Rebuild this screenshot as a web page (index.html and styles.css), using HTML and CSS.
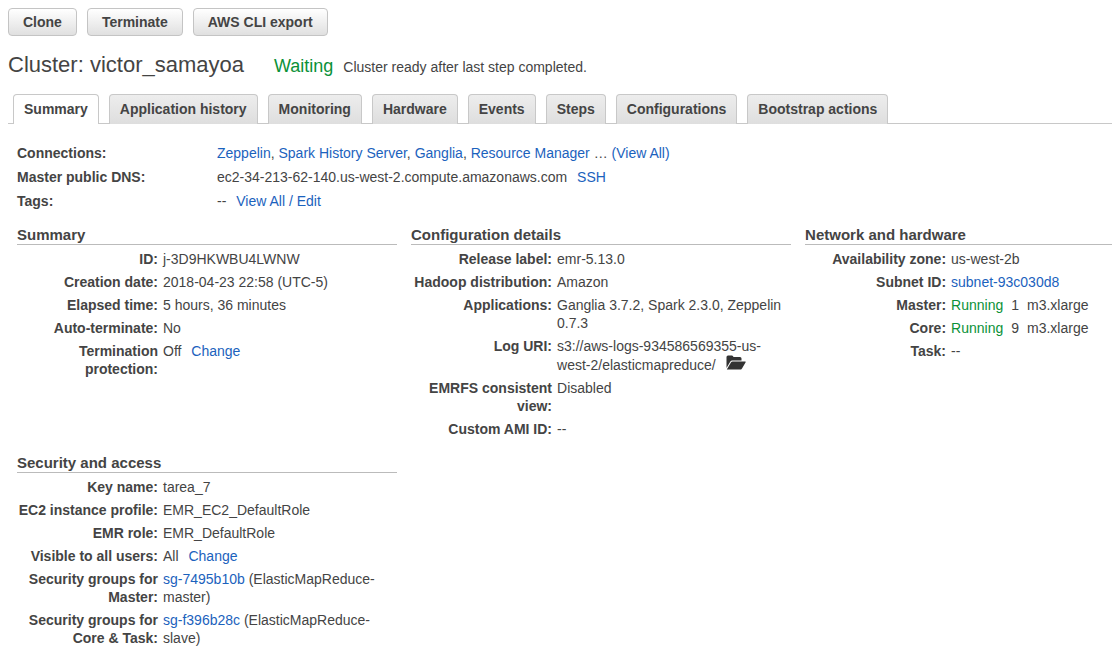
FILE: index.html
```html
<!DOCTYPE html>
<html lang="en">
<head>
<meta charset="utf-8">
<meta name="viewport" content="width=device-width, initial-scale=1">
<title>Cluster: victor_samayoa</title>
<link rel="stylesheet" href="styles.css">
</head>
<body>
<div class="toolbar">
  <button type="button" class="btn">Clone</button>
  <button type="button" class="btn">Terminate</button>
  <button type="button" class="btn">AWS CLI export</button>
</div>
<header class="cluster-header">
  <h1 class="cluster-name">Cluster: victor_samayoa</h1>
  <span class="cluster-state">Waiting</span>
  <span class="cluster-note">Cluster ready after last step completed.</span>
</header>
<div class="tabs" role="tablist">
  <button type="button" class="tab tab-active" role="tab" aria-selected="true">Summary</button>
  <button type="button" class="tab" role="tab">Application history</button>
  <button type="button" class="tab" role="tab">Monitoring</button>
  <button type="button" class="tab" role="tab">Hardware</button>
  <button type="button" class="tab" role="tab">Events</button>
  <button type="button" class="tab" role="tab">Steps</button>
  <button type="button" class="tab" role="tab">Configurations</button>
  <button type="button" class="tab" role="tab">Bootstrap actions</button>
</div>
<main class="content">
  <dl class="overview">
    <dt>Connections:</dt>
    <dd><a href="#">Zeppelin</a>, <a href="#">Spark History Server</a>, <a href="#">Ganglia</a>, <a href="#">Resource Manager</a> … <a href="#">(View All)</a></dd>
    <dt>Master public DNS:</dt>
    <dd>ec2-34-213-62-140.us-west-2.compute.amazonaws.com <a class="action" href="#">SSH</a></dd>
    <dt>Tags:</dt>
    <dd>-- <a class="action" href="#">View All / Edit</a></dd>
  </dl>
  <div class="panels">
    <section class="panel">
      <h2 class="panel-title">Summary</h2>
      <dl class="fields">
        <dt>ID:</dt><dd>j-3D9HKWBU4LWNW</dd>
        <dt>Creation date:</dt><dd>2018-04-23 22:58 (UTC-5)</dd>
        <dt>Elapsed time:</dt><dd>5 hours, 36 minutes</dd>
        <dt>Auto-terminate:</dt><dd>No</dd>
        <dt>Termination protection:</dt><dd>Off <a class="action" href="#">Change</a></dd>
      </dl>
    </section>
    <section class="panel">
      <h2 class="panel-title">Configuration details</h2>
      <dl class="fields">
        <dt>Release label:</dt><dd>emr-5.13.0</dd>
        <dt>Hadoop distribution:</dt><dd>Amazon</dd>
        <dt>Applications:</dt><dd>Ganglia 3.7.2, Spark 2.3.0, Zeppelin 0.7.3</dd>
        <dt>Log URI:</dt><dd>s3://aws-logs-934586569355-us-west-2/elasticmapreduce/ <a class="action" href="#" aria-label="Open log folder"><svg class="folder" viewBox="0 0 20 15" aria-hidden="true"><path d="M.5 13V2Q.5 .5 2 .5H6Q7 .5 7.500 2H14Q15.500 2 15.500 3.500V5.600H6.300Q4.900 5.600 4.200 6.800Z"/><path d="M.8 14.600 4.900 7.400Q5.500 6.400 6.600 6.400H19Q20.300 6.400 19.500 7.600L16 13.400Q15.300 14.600 14 14.600Z"/></svg></a></dd>
        <dt>EMRFS consistent view:</dt><dd>Disabled</dd>
        <dt>Custom AMI ID:</dt><dd>--</dd>
      </dl>
    </section>
    <section class="panel">
      <h2 class="panel-title">Network and hardware</h2>
      <dl class="fields">
        <dt>Availability zone:</dt><dd>us-west-2b</dd>
        <dt>Subnet ID:</dt><dd><a href="#">subnet-93c030d8</a></dd>
        <dt>Master:</dt><dd class="nodes"><span class="running">Running</span><span>1</span><span>m3.xlarge</span></dd>
        <dt>Core:</dt><dd class="nodes"><span class="running">Running</span><span>9</span><span>m3.xlarge</span></dd>
        <dt>Task:</dt><dd>--</dd>
      </dl>
    </section>
    <section class="panel">
      <h2 class="panel-title">Security and access</h2>
      <dl class="fields">
        <dt>Key name:</dt><dd>tarea_7</dd>
        <dt>EC2 instance profile:</dt><dd>EMR_EC2_DefaultRole</dd>
        <dt>EMR role:</dt><dd>EMR_DefaultRole</dd>
        <dt>Visible to all users:</dt><dd>All <a class="action" href="#">Change</a></dd>
        <dt>Security groups for Master:</dt><dd><a href="#">sg-7495b10b</a> (ElasticMapReduce-master)</dd>
        <dt>Security groups for Core &amp; Task:</dt><dd><a href="#">sg-f396b28c</a> (ElasticMapReduce-slave)</dd>
      </dl>
    </section>
  </div>
</main>
</body>
</html>
```
FILE: styles.css
```css
* { box-sizing: border-box; }
body {
  margin: 0;
  background: #fff;
  color: #444;
  font: 14px/18px "Liberation Sans", Arial, sans-serif;
}
a { color: #1b62bd; text-decoration: none; }
a:hover { text-decoration: underline; }
dl, dd, h1, h2 { margin: 0; }
dt { font-weight: bold; }
button { font: bold 14px/18px "Liberation Sans", Arial, sans-serif; color: #444; cursor: pointer; }

.toolbar { display: flex; gap: 10px; padding: 8px 8px 0; }
.btn {
  height: 28px;
  padding: 0 14px;
  border: 1px solid #c4c4c4;
  border-radius: 4px;
  background: linear-gradient(#fff, #e0e0e0);
}

.cluster-header { display: flex; align-items: baseline; padding: 14px 8px 0; }
.cluster-name { font-size: 22px; line-height: 30px; font-weight: normal; }
.cluster-state { margin-left: 30px; font-size: 18px; color: #0b9138; }
.cluster-note { margin-left: 10px; }

.tabs {
  display: flex;
  gap: 10px;
  margin: 14px 0 0 8px;
  padding-left: 5px;
  border-bottom: 1px solid #c8c8c8;
}
.tab {
  height: 30px;
  margin-bottom: -1px;
  padding: 0 10px 1px;
  border: 1px solid #c8c8c8;
  border-bottom: 0;
  border-radius: 4px 4px 0 0;
  background: linear-gradient(#ededed, #dedede);
}
.tab-active { background: #fff; }

.content { padding: 20px 0 8px 17px; }
.overview {
  display: grid;
  grid-template-columns: 190px 1fr;
  gap: 6px 10px;
}
.action { margin-left: 6px; }

.panels {
  display: grid;
  grid-template-columns: 26fr 26fr 21fr;
  gap: 16px 14px;
  margin-top: 16px;
}
.panel-title {
  margin-bottom: 5px;
  border-bottom: 1px solid #bbb;
  font-size: 15px;
  line-height: 18px;
}
.fields {
  display: grid;
  grid-template-columns: 141px 1fr;
  gap: 5px;
}
.fields dt { text-align: right; }
.nodes { display: flex; gap: 8px; }
.running { color: #0b9138; }
.folder { width: 20px; height: 15px; fill: #333; vertical-align: 0; }
```
